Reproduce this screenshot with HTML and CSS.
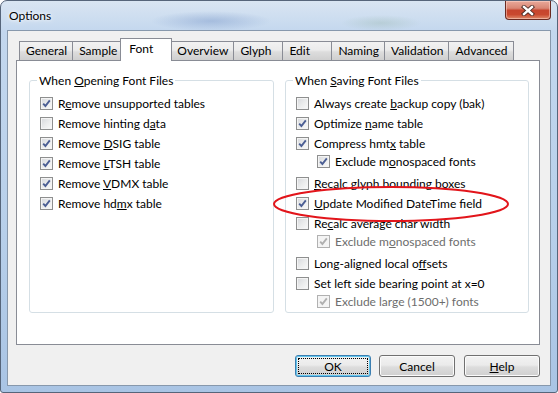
FILE: index.html
```html
<!DOCTYPE html>
<html lang="en">
    <head>
        <meta charset="UTF-8" />
        <title>Options</title>
        <link rel="stylesheet" href="styles.css">
    </head>
    <body>
        <div class="window">
            <div class="titlebar">
                <span class="title">Options</span>
                <div class="close">
                    <svg width="14" height="11" viewBox="0 0 14 11">
                        <path d="M3 2 L11 9 M11 2 L3 9" stroke="#4a2a24" stroke-width="4.2" stroke-linecap="square" />
                        <path d="M3 2 L11 9 M11 2 L3 9" stroke="#fff" stroke-width="2.4" stroke-linecap="square" />
                    </svg>
                </div>
            </div>

            <div class="client">
                <div class="tabs">
                    <div class="tab">General</div>
                    <div class="tab">Sample</div>
                    <div class="tab active">Font</div>
                    <div class="tab">Overview</div>
                    <div class="tab">Glyph</div>
                    <div class="tab">Edit</div>
                    <div class="tab">Naming</div>
                    <div class="tab">Validation</div>
                    <div class="tab">Advanced</div>
                </div>

                <div class="panel">
                    <fieldset class="group">
                        <legend>When <u>O</u>pening Font Files</legend>
                        <label class="opt"><span class="cb on"><svg viewBox="0 0 11 11"><path d="M2.2 5.6 L4.4 8 L8.8 2.4" /></svg></span><span>R<u>e</u>move unsupported tables</span></label>
                        <label class="opt"><span class="cb"></span><span>Remove hinting d<u>a</u>ta</span></label>
                        <label class="opt"><span class="cb on"><svg viewBox="0 0 11 11"><path d="M2.2 5.6 L4.4 8 L8.8 2.4" /></svg></span><span>Remove <u>D</u>SIG table</span></label>
                        <label class="opt"><span class="cb on"><svg viewBox="0 0 11 11"><path d="M2.2 5.6 L4.4 8 L8.8 2.4" /></svg></span><span>Remove <u>L</u>TSH table</span></label>
                        <label class="opt"><span class="cb on"><svg viewBox="0 0 11 11"><path d="M2.2 5.6 L4.4 8 L8.8 2.4" /></svg></span><span>Remove <u>V</u>DMX table</span></label>
                        <label class="opt"><span class="cb on"><svg viewBox="0 0 11 11"><path d="M2.2 5.6 L4.4 8 L8.8 2.4" /></svg></span><span>Remove hd<u>m</u>x table</span></label>
                    </fieldset>

                    <fieldset class="group">
                        <legend>When <u>S</u>aving Font Files</legend>
                        <label class="opt"><span class="cb"></span><span>Always create <u>b</u>ackup copy (bak)</span></label>
                        <label class="opt"><span class="cb on"><svg viewBox="0 0 11 11"><path d="M2.2 5.6 L4.4 8 L8.8 2.4" /></svg></span><span>Optimize <u>n</u>ame table</span></label>
                        <label class="opt"><span class="cb on"><svg viewBox="0 0 11 11"><path d="M2.2 5.6 L4.4 8 L8.8 2.4" /></svg></span><span>Compress hmt<u>x</u> table</span></label>
                        <label class="opt sub"><span class="cb on"><svg viewBox="0 0 11 11"><path d="M2.2 5.6 L4.4 8 L8.8 2.4" /></svg></span><span>Exclude m<u>o</u>nospaced fonts</span></label>
                        <label class="opt"><span class="cb"></span><span><u>R</u>ecalc glyph bounding boxes</span></label>
                        <label class="opt"><span class="cb on"><svg viewBox="0 0 11 11"><path d="M2.2 5.6 L4.4 8 L8.8 2.4" /></svg></span><span><u>U</u>pdate Modified DateTime field</span></label>
                        <label class="opt"><span class="cb"></span><span>Re<u>c</u>alc average char width</span></label>
                        <label class="opt sub disabled"><span class="cb on"><svg viewBox="0 0 11 11"><path d="M2.2 5.6 L4.4 8 L8.8 2.4" /></svg></span><span>Exclude m<u>o</u>nospaced fonts</span></label>
                        <label class="opt"><span class="cb"></span><span>Long-aligned local o<u>f</u>fsets</span></label>
                        <label class="opt"><span class="cb"></span><span>Set left side bearing point at x=0</span></label>
                        <label class="opt sub disabled"><span class="cb on"><svg viewBox="0 0 11 11"><path d="M2.2 5.6 L4.4 8 L8.8 2.4" /></svg></span><span>Exclude large (1500+) fonts</span></label>
                    </fieldset>
                </div>

                <div class="buttons">
                    <button class="btn default">OK</button>
                    <button class="btn">Cancel</button>
                    <button class="btn help"><u>H</u>elp</button>
                </div>
            </div>

            <!-- red marker drawn over the dialog -->
            <svg class="mark" width="240" height="40" viewBox="0 0 240 40">
                <ellipse cx="119" cy="19" rx="117" ry="17" fill="none" stroke="#e2151b" stroke-width="2" />
            </svg>
        </div>
    </body>
</html>
```

FILE: styles.css
```css
* {
    box-sizing: border-box;
}

body {
    margin: 0;
    font-family: Lato, "Noto Sans", sans-serif;
    font-size: 12px;
    color: #000;
}

.window {
    position: relative;
    width: 558px;
    height: 393px;
    display: flex;
    flex-direction: column;
    border: 1px solid #56657a;
    border-radius: 7px 7px 3px 3px;
    overflow: hidden;
    background:
        radial-gradient(ellipse 60px 10px at 210px 20px, rgba(120, 150, 200, 0.45), transparent),
        radial-gradient(ellipse 40px 8px at 380px 22px, rgba(150, 180, 170, 0.35), transparent),
        linear-gradient(to bottom, #d9e5f2 0%, #c3d7ee 8%, #b7cfea 60%, #a9c4e4 100%);
}

.titlebar {
    height: 29px;
    display: flex;
    justify-content: space-between;
    align-items: flex-start;
    padding-left: 8px;
}

.title {
    margin-top: 7px;
    line-height: 15px;
    text-shadow: 0 0 6px #fff, 0 0 3px #fff;
}

.close {
    width: 46px;
    height: 19px;
    margin-right: 6px;
    display: flex;
    align-items: center;
    justify-content: center;
    border: 1px solid #6a2b22;
    border-top: none;
    border-radius: 0 0 4px 4px;
    background: linear-gradient(to bottom, #e9a99a 0%, #d98775 40%, #c6452e 52%, #c9492f 75%, #de8a6a 100%);
    box-shadow: inset 0 0 0 1px rgba(255, 220, 210, 0.5);
}

.client {
    flex: 1;
    margin: 0 6px 6px;
    border: 1px solid #8798ac;
    background: #f0f0f0;
    padding: 7px 10px 0 8px;
}

.tabs {
    display: flex;
    align-items: flex-end;
    height: 22px;
    padding-left: 3px;
}

.tab {
    min-width: 50px;
    height: 19px;
    line-height: 17px;
    padding: 0 5px 0 6px;
    margin-right: -1px;
    border: 1px solid #898c95;
    border-bottom: none;
    background: linear-gradient(to bottom, #f2f2f2 0%, #ebebeb 45%, #dddddd 55%, #cfcfcf 100%);
}

.tab.active {
    position: relative;
    z-index: 1;
    min-width: 52px;
    height: 23px;
    margin: 0 -2px -1px -2px;
    padding: 0 8px;
    line-height: 19px;
    background: #fff;
}

.panel {
    height: 285px;
    border: 1px solid #898c95;
    background: #fff;
    padding: 12px 10px 0 12px;
    display: flex;
    gap: 11px;
}

.group {
    margin: 0;
    width: 245px;
    height: 240px;
    padding: 5px 0 0 10px;
    border: 1px solid #d5dfe5;
    border-radius: 3px;
}

.group + .group {
    width: 244px;
}

.group legend {
    margin-left: -3px;
    padding: 0 2px;
    line-height: 15px;
}

.opt {
    display: flex;
    align-items: center;
    height: 20px;
    white-space: nowrap;
}

.opt.sub {
    height: 18px;
    margin: -1px 0 3px 21px;
}

.opt.disabled {
    color: #6d6d6d;
}

.cb {
    flex: none;
    width: 13px;
    height: 13px;
    margin-right: 5px;
    border: 1px solid #8e8f8f;
    background: linear-gradient(135deg, #d6d8dc 0%, #eceded 55%, #fafafa 100%);
    box-shadow: inset 0 0 0 1px #f4f4f4;
}

.cb svg {
    display: block;
    width: 11px;
    height: 11px;
}

.cb svg path {
    fill: none;
    stroke: #4c5f94;
    stroke-width: 1.9;
}

.disabled .cb {
    border-color: #b1b1b1;
    background: #f4f4f4;
}

.disabled .cb svg path {
    stroke: #b0b0b0;
}

.buttons {
    display: flex;
    justify-content: flex-end;
    gap: 8px;
    margin-top: 10px;
}

.btn {
    width: 76px;
    height: 22px;
    padding: 0;
    font: inherit;
    color: #000;
    border: 1px solid #707070;
    border-radius: 3px;
    background: linear-gradient(to bottom, #f2f2f2 0%, #ebebeb 45%, #dddddd 55%, #cfcfcf 100%);
    box-shadow: inset 0 0 0 1px #fbfbfb;
}

.btn.help {
    margin-left: 1px;
}

.btn.default {
    border-color: #3c7fb1;
    box-shadow: inset 0 0 0 1px #62c6ee;
    outline: 1px dotted #000;
    outline-offset: -4px;
}

.mark {
    position: absolute;
    left: 271px;
    top: 184px;
}
```
